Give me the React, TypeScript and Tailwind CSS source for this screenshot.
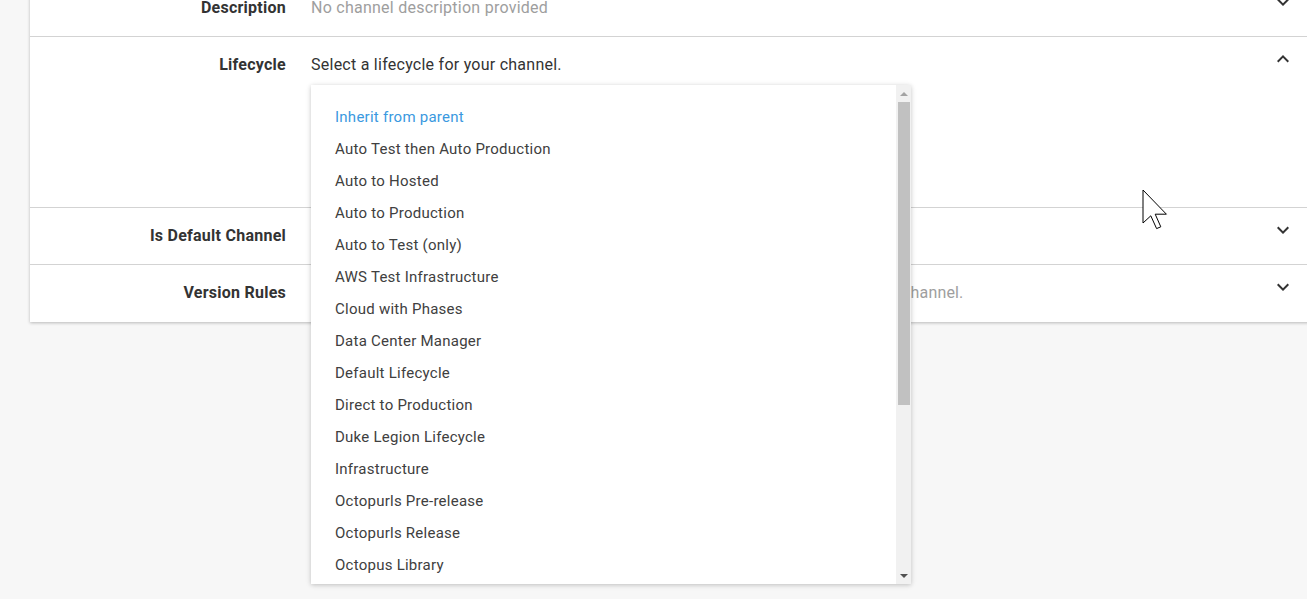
import React from 'react';

const lifecycles = [
  'Inherit from parent',
  'Auto Test then Auto Production',
  'Auto to Hosted',
  'Auto to Production',
  'Auto to Test (only)',
  'AWS Test Infrastructure',
  'Cloud with Phases',
  'Data Center Manager',
  'Default Lifecycle',
  'Direct to Production',
  'Duke Legion Lifecycle',
  'Infrastructure',
  'Octopurls Pre-release',
  'Octopurls Release',
  'Octopus Library',
  'Production Only',
];

function Chevron({ up }: { up?: boolean }) {
  return (
    <svg width="24" height="24" viewBox="0 0 24 24" className={up ? 'rotate-180' : ''}>
      <path d="M7.41 8.59 12 13.17l4.59-4.58L18 10l-6 6-6-6z" fill="#333333" />
    </svg>
  );
}

function Row({ label, children, chevronUp, className }: { label: string; children?: React.ReactNode; chevronUp?: boolean; className?: string }) {
  return (
    <div className={`grid grid-cols-[256px_1fr_24px] gap-x-[25px] pr-[35px] border-b border-[#d3d3d3] ${className ?? ''}`}>
      <div className="text-right text-base font-bold tracking-[0.25px] text-[#333333] leading-6 pt-4">{label}</div>
      <div className="pt-4 leading-6 relative">{children}</div>
      <div className="pt-[10px]">
        <Chevron up={chevronUp} />
      </div>
    </div>
  );
}

export default function App() {
  return (
    <div className="h-[599px] w-full overflow-hidden bg-[#f7f7f7] relative" style={{ fontFamily: 'Roboto, "Liberation Sans", sans-serif' }}>
      <div className="ml-[30px] w-[1300px] bg-white shadow-[0_1px_3px_rgba(0,0,0,0.25)] -mt-5">
        <Row label="Description" className="h-[57px]">
          <span className="text-base tracking-[0.25px] text-[#9e9e9e]">No channel description provided</span>
        </Row>

        <Row label="Lifecycle" chevronUp className="h-[171px]">
          <span className="text-base tracking-[0.25px] text-[#333333]">Select a lifecycle for your channel.</span>

          {/* open dropdown */}
          <div className="absolute left-0 top-[48px] z-10 w-[600px] h-[499px] bg-white shadow-[0_1px_6px_rgba(0,0,0,0.12),0_1px_4px_rgba(0,0,0,0.12)] flex">
            <div className="flex-1 overflow-hidden pt-4">
              {lifecycles.map((l, i) => (
                <div
                  key={l}
                  className={`h-8 leading-8 pl-6 text-[15px] tracking-[0.25px] ${i === 0 ? 'text-[#3a99e0]' : 'text-[#404040]'}`}
                >
                  {l}
                </div>
              ))}
            </div>
            {/* scrollbar */}
            <div className="w-[15px] bg-[#f1f1f1] flex flex-col items-center">
              <div className="h-[17px] flex items-center justify-center">
                <div className="w-0 h-0 border-x-[4px] border-x-transparent border-b-[4px] border-b-[#a3a3a3]" />
              </div>
              <div className="w-[12px] h-[303px] bg-[#c1c1c1]" />
              <div className="flex-1" />
              <div className="h-[17px] flex items-center justify-center">
                <div className="w-0 h-0 border-x-[4px] border-x-transparent border-t-[4px] border-t-[#505050]" />
              </div>
            </div>
          </div>
        </Row>

        <Row label="Is Default Channel" className="h-[57px]">
          <span className="text-base tracking-[0.25px] text-[#9e9e9e]">This is not the default channel.</span>
        </Row>

        <Row label="Version Rules" className="h-[57px] border-b-0">
          <span className="text-base tracking-[0.16px] text-[#9e9e9e] whitespace-nowrap">
            No version rules are defined, so any version of any package can be used with this channel.
          </span>
        </Row>
      </div>

      {/* mouse pointer */}
      <svg className="absolute left-[1142px] top-[189px]" width="28" height="42" viewBox="0 0 14 21">
        <path
          d="M0.5 0.5 L0.5 17 L4.4 13.4 L7.3 19.8 L9.4 18.9 L6.6 12.6 L12.2 12.6 Z"
          fill="#ffffff"
          stroke="#000000"
          strokeWidth="0.5"
          strokeLinejoin="miter"
        />
      </svg>
    </div>
  );
}
